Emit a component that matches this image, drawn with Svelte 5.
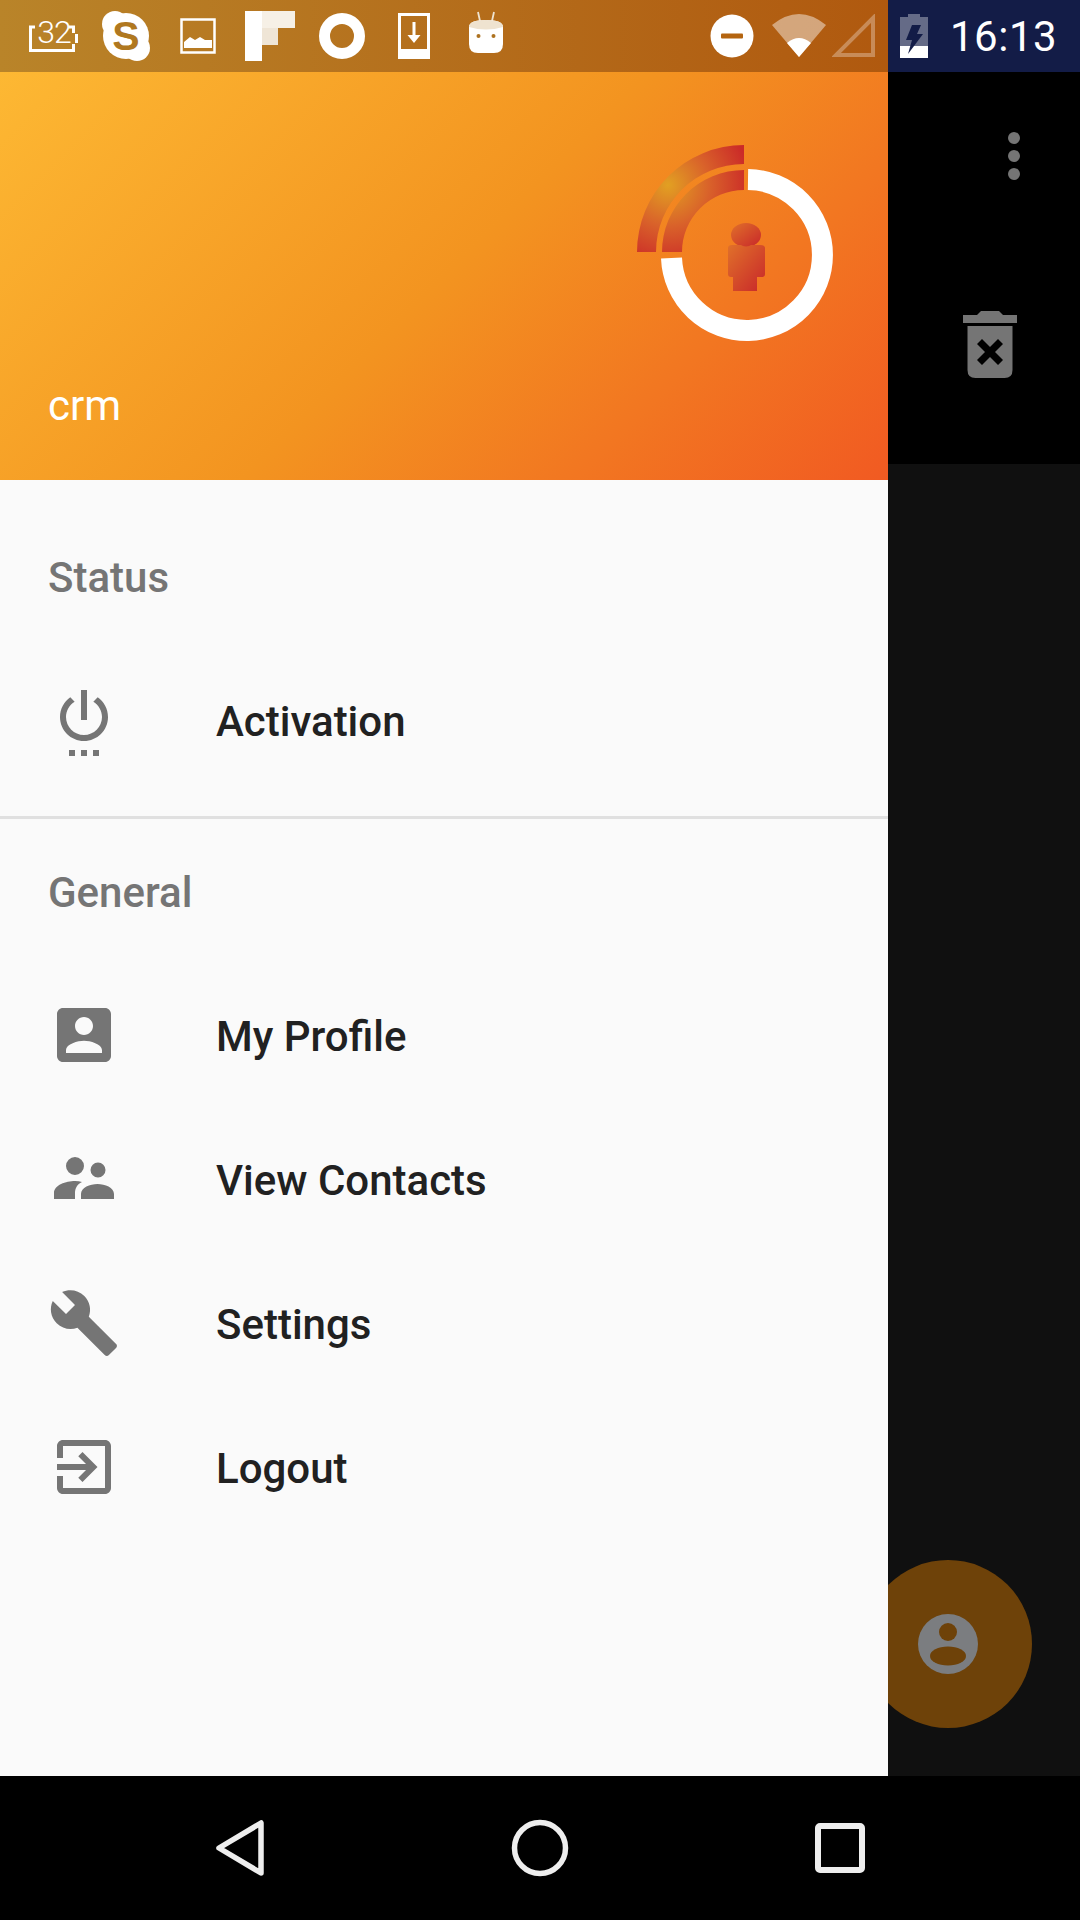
<script>
  const personIcon = {
    activation: 'M7 24h2v-2H7v2zm4 0h2v-2h-2v2zm2-22h-2v10h2V2zm3.56 2.44l-1.45 1.45C16.84 6.94 18 8.83 18 11c0 3.31-2.69 6-6 6s-6-2.69-6-6c0-2.17 1.16-4.06 2.88-5.12L7.44 4.44C5.36 5.88 4 8.28 4 11c0 4.42 3.58 8 8 8s8-3.58 8-8c0-2.72-1.36-5.12-3.44-6.56zM15 24h2v-2h-2v2z',
    profile: 'M3 5v14c0 1.1.89 2 2 2h14c1.1 0 2-.9 2-2V5c0-1.1-.9-2-2-2H5c-1.11 0-2 .9-2 2zm12 4c0 1.66-1.34 3-3 3s-3-1.34-3-3 1.34-3 3-3 3 1.34 3 3zm-9 8c0-2 4-3.1 6-3.1s6 1.1 6 3.1v1H6v-1z',
    contacts: 'M9 4.67a3 3 0 1 0 0 6 3 3 0 1 0 0-6zM16.67 6.5a2.5 2.5 0 1 0 0 5 2.5 2.5 0 1 0 0-5zM2 18.67V16.67C2 14 6 12.67 9 12.67Q10.33 12.67 11.33 13C9.67 13.67 9 15.33 9 16.67V18.67ZM11 18.67V17C11 14.8 14 13.67 16.5 13.67S22 14.8 22 17V18.67Z',
    settings: 'M22.7 19l-9.1-9.1c.9-2.3.4-5-1.5-6.9-2-2-5-2.4-7.4-1.3L9 6 6 9 1.6 4.7C.4 7.1.9 10.1 2.9 12.1c1.9 1.9 4.6 2.4 6.9 1.5l9.1 9.1c.4.4 1 .4 1.4 0l2.3-2.3c.5-.4.5-1.1.1-1.4z',
    logout: 'M10.09 15.59L11.5 17l5-5-5-5-1.41 1.41L12.67 11H3v2h9.67l-2.58 2.59zM19 3H5c-1.11 0-2 .9-2 2v4h2V5h14v14H5v-4H3v4c0 1.1.89 2 2 2h14c1.1 0 2-.9 2-2V5c0-1.1-.9-2-2-2z'
  };

  const statusItems = [{ label: 'Activation', icon: personIcon.activation }];
  const generalItems = [
    { label: 'My Profile', icon: personIcon.profile },
    { label: 'View Contacts', icon: personIcon.contacts },
    { label: 'Settings', icon: personIcon.settings },
    { label: 'Logout', icon: personIcon.logout }
  ];
</script>

{#snippet menuRow(item)}
  <div class="row">
    <svg class="row-icon" viewBox="0 0 24 24"><path d={item.icon} fill="#757575" /></svg>
    <span>{item.label}</span>
  </div>
{/snippet}

<div class="screen">
  <div class="statusbar">
    <div class="status-left">
      <!-- battery saver 32 -->
      <div class="cell">
        <svg viewBox="0 0 72 72" width="72" height="72">
          <path d="M17 27h-4.500v23.500h43V44M51 27h4.500v6" fill="none" stroke="#fff" stroke-width="3" />
          <rect x="57" y="34" width="3" height="9" fill="#fff" />
        </svg>
        <span class="batt-num">32</span>
      </div>
      <!-- skype -->
      <div class="cell">
        <svg viewBox="0 0 72 72" width="72" height="72">
          <circle cx="36" cy="36" r="23" fill="#fff" />
          <circle cx="25" cy="24" r="13" fill="#fff" />
          <circle cx="47" cy="48" r="13" fill="#fff" />
          <text x="36" y="50" text-anchor="middle" class="skype-s">S</text>
        </svg>
      </div>
      <!-- picture -->
      <div class="cell">
        <svg viewBox="0 0 72 72" width="72" height="72">
          <rect x="19.500" y="19.500" width="33" height="33" fill="none" stroke="#fff" stroke-width="2.500" />
          <path d="M22 48v-6l6-5 5 3 5-3 5 3 7 0v8z" fill="#fff" />
        </svg>
      </div>
      <!-- flipboard -->
      <div class="cell">
        <svg viewBox="0 0 72 72" width="72" height="72">
          <rect x="11" y="11" width="17" height="50" fill="#fff" />
          <rect x="28" y="11" width="33" height="17" fill="#f6f0e6" />
          <rect x="28" y="28" width="16" height="17" fill="#efe5d6" />
        </svg>
      </div>
      <!-- ring -->
      <div class="cell">
        <svg viewBox="0 0 72 72" width="72" height="72">
          <circle cx="36" cy="36" r="17.500" fill="none" stroke="#fff" stroke-width="11" />
        </svg>
      </div>
      <!-- download -->
      <div class="cell">
        <svg viewBox="0 0 72 72" width="72" height="72">
          <path d="M20 13h32v46H20zM23 16v33h26V16z" fill="#fff" fill-rule="evenodd" />
          <path d="M34.500 22h3v13h5l-6.500 8-6.500-8h5z" fill="#fff" />
        </svg>
      </div>
      <!-- android m -->
      <div class="cell">
        <svg viewBox="0 0 72 72" width="72" height="72">
          <path d="M28 12l2 9M44 12l-2 9" stroke="#efe3d0" stroke-width="1.800" fill="none" />
          <path d="M19 27q0-7 17-7t17 7v17q0 9-9 9H28q-9 0-9-9z" fill="#fff" />
          <path d="M19 27q0-7 17-7t17 7q-17 5-34 0z" fill="#efe3d0" />
          <circle cx="28.500" cy="36" r="2" fill="#ad7220" />
          <circle cx="43.500" cy="36" r="2" fill="#ad7220" />
        </svg>
      </div>

      <svg class="dnd" viewBox="0 0 44 44" width="44" height="44">
        <circle cx="22" cy="22" r="21.500" fill="#fff" />
        <rect x="11" y="19.500" width="22" height="5" rx="1" fill="#b4640f" />
      </svg>
      <svg class="wifi" viewBox="0 0 54 44" width="54" height="44">
        <path d="M0 11Q27-11 54 11L27 43z" fill="#fff" fill-opacity="0.45" />
        <path d="M15 29Q27 19 39 29L27 43z" fill="#fff" />
      </svg>
      <svg class="signal" viewBox="0 0 44 44" width="44" height="44">
        <path d="M41 4V41H4z" fill="none" stroke="#fff" stroke-opacity="0.3" stroke-width="4" />
      </svg>
    </div>
    <div class="status-right">
      <svg viewBox="0 0 30 44" width="30" height="44">
        <path d="M9 0h12v3h8v41H1V3h8z" fill="#fff" fill-opacity="0.35" />
        <path d="M1 32h28v12H1z" fill="#fff" />
        <path d="M13 11h9l-4 9h6L9 40l4-14H7z" fill="#131c47" />
      </svg>
      <span class="clock">16:13</span>
    </div>
  </div>

  <div class="middle">
    <nav class="drawer">
      <div class="drawer-head">
        <span class="username">crm</span>
        <svg class="logo" viewBox="0 0 210 210" width="210" height="210">
          <defs>
            <radialGradient id="arcGrad" gradientUnits="userSpaceOnUse" cx="38" cy="45" r="82">
              <stop offset="0" stop-color="#e2a022" />
              <stop offset="0.5" stop-color="#d9622a" />
              <stop offset="1" stop-color="#cb2a28" />
            </radialGradient>
            <linearGradient id="manGrad" x1="0" y1="0" x2="1" y2="1">
              <stop offset="0" stop-color="#e0702a" />
              <stop offset="1" stop-color="#c8272a" />
            </linearGradient>
          </defs>
          <path d="M118 39.500A75.500 75.500 0 1 1 41.500 118" fill="none" stroke="#fff" stroke-width="21" />
          <path d="M114 30A82 82 0 0 0 32 112H52A62 62 0 0 1 114 50Z" fill="url(#arcGrad)" />
          <path d="M114 5A107 107 0 0 0 7 112H26A88 88 0 0 1 114 24Z" fill="url(#arcGrad)" />
          <ellipse cx="116" cy="95" rx="15" ry="12" fill="url(#manGrad)" />
          <path d="M98 108q0-3 4-3h9q5 3 10 0h9q5 0 5 3v26q0 3-3 3h-5v14h-24v-14h-2q-3 0-3-3z" fill="url(#manGrad)" />
        </svg>
      </div>

      <div class="section first">
        <div class="section-title">Status</div>
        {#each statusItems as item}
          {@render menuRow(item)}
        {/each}
      </div>
      <div class="divider"></div>
      <div class="section">
        <div class="section-title">General</div>
        {#each generalItems as item}
          {@render menuRow(item)}
        {/each}
      </div>
    </nav>

    <div class="scrim">
      <div class="toolbar">
        <div class="dots">
          <i></i><i></i><i></i>
        </div>
        <svg class="trash" viewBox="0 0 54 68" width="54" height="68">
          <path d="M0 4h14l4-4h18l4 4h14v8H0zM4.500 15h45v44q0 8-8 8h-29q-8 0-8-8z" fill="#757575" />
          <path d="M14 33l5-5 8 8 8-8 5 5-8 8 8 8-5 5-8-8-8 8-5-5 8-8z" fill="#000" />
        </svg>
      </div>
    </div>

    <div class="fab">
      <svg viewBox="0 0 60 60" width="60" height="60">
        <circle cx="30" cy="30" r="30" fill="#7b7d80" />
        <circle cx="30" cy="18" r="9" fill="#6e4209" />
        <ellipse cx="30" cy="42" rx="18" ry="9.500" fill="#6e4209" />
      </svg>
    </div>
  </div>

  <div class="navbar">
    <div class="nav-btn">
      <svg viewBox="0 0 56 60" width="56" height="60">
        <path d="M7 30L49 5V55z" fill="none" stroke="#eee" stroke-width="5.500" stroke-linejoin="round" />
      </svg>
    </div>
    <div class="nav-btn">
      <svg viewBox="0 0 60 60" width="60" height="60">
        <circle cx="30" cy="30" r="25.500" fill="none" stroke="#eee" stroke-width="5.500" />
      </svg>
    </div>
    <div class="nav-btn">
      <svg viewBox="0 0 60 60" width="60" height="60">
        <rect x="8" y="8" width="44" height="44" rx="2" fill="none" stroke="#eee" stroke-width="6" />
      </svg>
    </div>
  </div>
</div>

<style>
  :global(body) {
    margin: 0;
    background: #000;
  }

  .screen {
    width: 1080px;
    height: 1920px;
    display: flex;
    flex-direction: column;
    overflow: hidden;
    font-family: Roboto, "Liberation Sans", sans-serif;
  }

  .statusbar {
    height: 72px;
    display: flex;
    flex: none;
  }

  .status-left {
    width: 888px;
    box-sizing: border-box;
    padding: 0 12px 0 18px;
    display: flex;
    align-items: center;
    background: linear-gradient(90deg, #b98429, #b0590f);
  }

  .cell {
    width: 72px;
    height: 72px;
    position: relative;
    flex: none;
  }

  .cell svg {
    display: block;
  }

  .batt-num {
    position: absolute;
    left: 0;
    right: 0;
    top: 15px;
    text-align: center;
    color: #fff;
    font-size: 32px;
    font-weight: 300;
    line-height: 34px;
    letter-spacing: -1px;
  }

  .skype-s {
    font-family: "Liberation Sans", sans-serif;
    font-weight: 700;
    font-size: 41px;
    fill: #b07820;
  }

  .dnd {
    margin-left: auto;
  }

  .wifi {
    margin-left: 18px;
  }

  .signal {
    margin-left: 6px;
  }

  .status-right {
    flex: 1;
    display: flex;
    align-items: center;
    padding-left: 11px;
    background: #131c47;
  }

  .clock {
    margin-left: 21px;
    color: #fff;
    font-size: 42px;
    letter-spacing: 0.5px;
  }

  .middle {
    flex: 1;
    display: flex;
    position: relative;
  }

  .drawer {
    width: 888px;
    flex: none;
    background: #fafafa;
    position: relative;
    z-index: 2;
  }

  .drawer-head {
    height: 408px;
    box-sizing: border-box;
    padding: 68px 48px 0;
    display: flex;
    justify-content: space-between;
    align-items: flex-start;
    background: linear-gradient(135deg, #fdb833, #f39420 50%, #f15a22);
  }

  .username {
    align-self: flex-end;
    margin-bottom: 52px;
    color: #fff;
    font-size: 42px;
    line-height: 44px;
  }

  .section {
    display: flex;
    flex-direction: column;
  }

  .section.first {
    padding-top: 24px;
    padding-bottom: 22px;
  }

  .section-title {
    height: 146px;
    box-sizing: border-box;
    padding: 51px 48px 0;
    color: #757575;
    font-size: 42px;
    font-weight: 500;
    line-height: 46px;
  }

  .row {
    height: 144px;
    box-sizing: border-box;
    padding-left: 48px;
    display: flex;
    align-items: center;
    gap: 96px;
    color: #212121;
    font-size: 42px;
    font-weight: 500;
  }

  .row span {
    margin-bottom: 2px;
  }

  .row-icon {
    width: 72px;
    height: 72px;
    flex: none;
    margin-bottom: 4px;
  }

  .divider {
    height: 3px;
    background: #e0e0e0;
  }

  .scrim {
    flex: 1;
    background: #101010;
  }

  .toolbar {
    height: 392px;
    box-sizing: border-box;
    background: #000;
    display: flex;
    flex-direction: column;
    align-items: flex-end;
    padding: 60px 37px 0 0;
  }

  .dots {
    display: flex;
    flex-direction: column;
    gap: 6px;
    margin-right: 23px;
  }

  .dots i {
    width: 12px;
    height: 12px;
    border-radius: 50%;
    background: #757575;
  }

  .trash {
    margin-top: 131px;
    margin-right: 26px;
  }

  .fab {
    position: absolute;
    left: 864px;
    top: 1488px;
    width: 168px;
    height: 168px;
    border-radius: 50%;
    background: #6e4209;
    display: flex;
    align-items: center;
    justify-content: center;
    z-index: 1;
  }

  .navbar {
    height: 144px;
    flex: none;
    padding: 0 90px;
    display: flex;
    background: #000;
  }

  .nav-btn {
    width: 300px;
    display: flex;
    align-items: center;
    justify-content: center;
  }
</style>
